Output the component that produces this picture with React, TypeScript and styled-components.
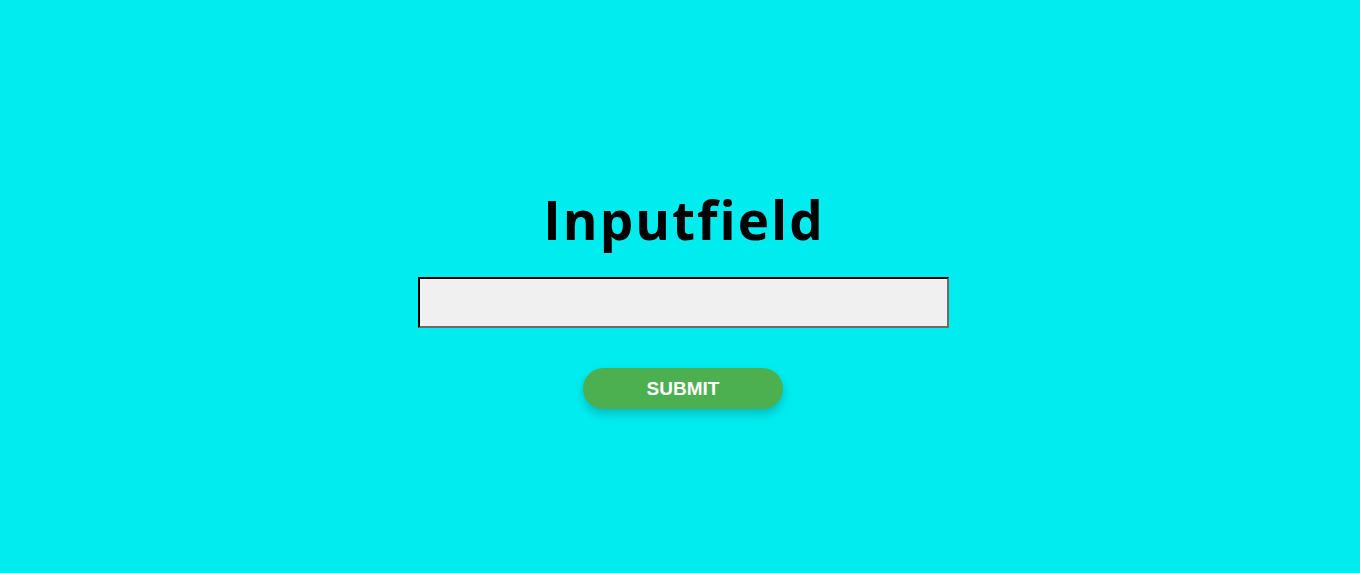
import React from "react";
import styled, { createGlobalStyle } from "styled-components";

const Global = createGlobalStyle`
  html, body { margin: 0; padding: 0; background: #00ecef; }
  body { font-family: "Liberation Sans", Arial, sans-serif; }
`;

const Page = styled.main`
  min-height: 573px;
  display: flex;
  flex-direction: column;
  align-items: center;
  padding-top: 185px;
  padding-left: 6px;
  box-sizing: border-box;
`;

const Title = styled.h1`
  margin: 0;
  font-family: "Open Sans", "Noto Sans", sans-serif;
  font-weight: 700;
  font-size: 53px;
  line-height: 70px;
  color: #000;
  letter-spacing: 2px;
  padding-left: 2px;
`;

const Field = styled.input`
  margin-top: 22px;
  width: 531px;
  height: 51px;
  box-sizing: border-box;
  background: #f0f0f0;
  border: 2px inset #767676;
  border-top-color: #111;
  border-left-color: #111;
  border-right-color: #6b6b6b;
  border-bottom-color: #6b6b6b;
  outline: none;
  padding: 0 8px;
  font-size: 18px;
`;

const Submit = styled.button`
  margin-top: 40px;
  width: 200px;
  height: 41px;
  border: none;
  border-radius: 21px;
  background: #4caf50;
  color: #fff;
  font-family: "Liberation Sans", Arial, sans-serif;
  font-weight: 700;
  font-size: 19px;
  padding: 1px 0 0;
  box-shadow: 0 5px 10px rgba(0, 0, 0, 0.2);
  cursor: pointer;
`;

export default function App() {
  return (
    <>
      <Global />
      <Page>
        <Title>Inputfield</Title>
        <Field type="text" aria-label="Inputfield" />
        <Submit type="button">SUBMIT</Submit>
      </Page>
    </>
  );
}
